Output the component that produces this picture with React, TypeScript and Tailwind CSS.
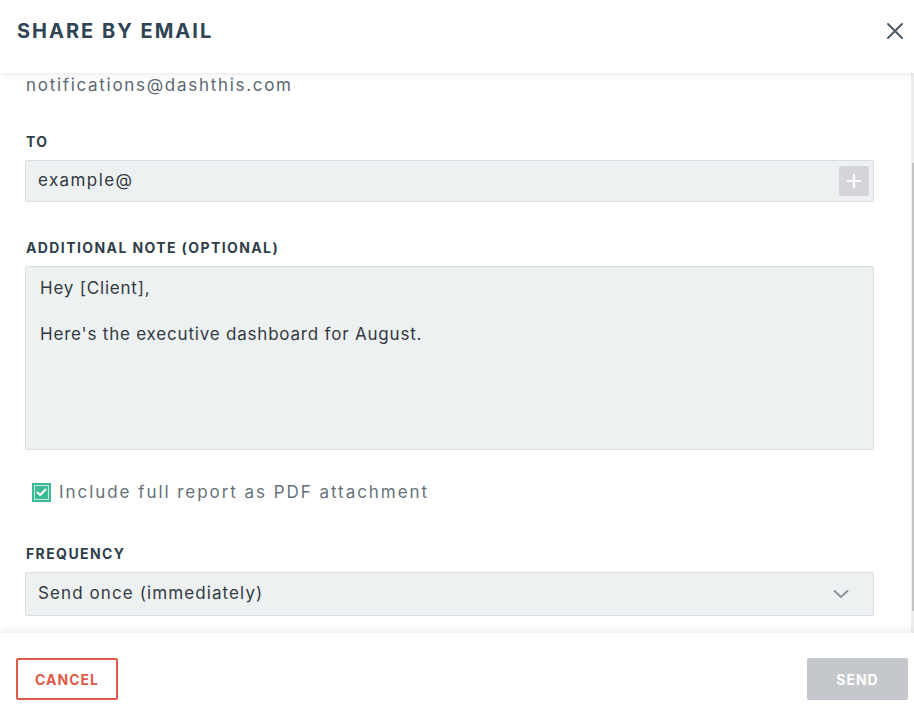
import React from "react";

export default function App() {
  const font = { fontFamily: "Inter, 'Open Sans', sans-serif" };
  return (
    <div className="w-[914px] h-[715px] bg-white flex flex-col overflow-hidden" style={font}>
      {/* Header */}
      <div className="h-[73px] shrink-0 flex items-center justify-between pl-[17px] pr-[9px] relative z-10 shadow-[0_2px_6px_rgba(0,0,0,0.08)]">
        <h1 className="text-[20px] font-bold tracking-[2px] text-[#2f4454] leading-none mt-[-12px]">SHARE BY EMAIL</h1>
        <button className="w-[20px] h-[20px] flex items-center justify-center mt-[-12px] text-[#4a5a66]">
          <svg width="18" height="18" viewBox="0 0 18 18" fill="none" stroke="currentColor" strokeWidth="2" strokeLinecap="round">
            <path d="M2 2 L16 16 M16 2 L2 16" />
          </svg>
        </button>
      </div>

      {/* Body */}
      <div className="flex-1 flex min-h-0">
        <div className="flex-1 pl-[25px] pr-[37px] pt-[2px]">
          <div className="text-[17px] tracking-[1.7px] text-[#5b6771] leading-[20px] ml-[1px]">notifications@dashthis.com</div>

          <div className="mt-[39px] text-[14px] font-bold text-[#2f3f4a] tracking-[1.4px] leading-[16px] ml-[1px]">TO</div>
          <div className="mt-[10px] h-[42px] bg-[#eef1f2] border border-[#dcdfe1] rounded-[2px] flex items-center justify-between pl-[12px] pr-[4px]">
            <span className="text-[17px] text-[#333a3f] tracking-[1.4px]">example@</span>
            <div className="w-[30px] h-[30px] bg-[#d4d4da] rounded-[2px] flex items-center justify-center">
              <svg width="14" height="14" viewBox="0 0 14 14" stroke="white" strokeWidth="2.2">
                <path d="M7 0 V14 M0 7 H14" />
              </svg>
            </div>
          </div>

          <div className="mt-[38px] text-[14px] font-bold text-[#2f3f4a] tracking-[1.4px] leading-[16px] ml-[1px]">ADDITIONAL NOTE (OPTIONAL)</div>
          <div className="mt-[10px] h-[184px] bg-[#eef1f2] border border-[#dcdfe1] rounded-[2px] pl-[14px] pt-[10px] text-[17px] text-[#333a3f] leading-[23px] tracking-[0.8px]">
            <div>Hey [Client],</div>
            <div className="mt-[23px]">Here's the executive dashboard for August.</div>
          </div>

          <div className="mt-[30px] flex items-center ml-[7px]">
            <div className="w-[19px] h-[19px] bg-[#3dbb98] flex items-center justify-center">
              <div className="w-[15px] h-[15px] border border-[#bfeadc] flex items-center justify-center">
                <svg width="11" height="9" viewBox="0 0 11 9" fill="none" stroke="white" strokeWidth="2" strokeLinecap="round" strokeLinejoin="round">
                  <path d="M1.5 4.5 L4.2 7 L9.5 1.5" />
                </svg>
              </div>
            </div>
            <span className="ml-[8px] text-[17px] text-[#66727a] tracking-[1.95px]">Include full report as PDF attachment</span>
          </div>

          <div className="mt-[40px] text-[14px] font-bold text-[#2f3f4a] tracking-[1.4px] leading-[16px] ml-[1px]">FREQUENCY</div>
          <div className="mt-[10px] h-[44px] bg-[#eef1f2] border border-[#dcdfe1] rounded-[2px] flex items-center justify-between pl-[12px] pr-[24px]">
            <span className="text-[17px] text-[#333a3f] tracking-[1.1px]">Send once (immediately)</span>
            <svg width="16" height="10" viewBox="0 0 16 10" fill="none" stroke="#8a939a" strokeWidth="2">
              <path d="M1 1.5 L8 8 L15 1.5" />
            </svg>
          </div>
        </div>
        {/* scrollbar */}
        <div className="w-[3px] bg-[#ededed] pt-[90px] pb-[22px] flex">
          <div className="flex-1 bg-[#c4c4c4] ml-[1px] w-[2px]" />
        </div>
      </div>

      {/* Footer */}
      <div className="h-[82px] shrink-0 flex items-start justify-between pl-[16px] pr-[6px] pt-[25px] relative shadow-[0_-3px_8px_rgba(0,0,0,0.07)]">
        <button className="w-[102px] h-[42px] border-2 border-[#e05a4a] rounded-[2px] text-[#e05a4a] text-[14px] font-bold tracking-[1px]">CANCEL</button>
        <button className="w-[101px] h-[42px] bg-[#c4c8cc] rounded-[2px] text-white text-[14px] font-bold tracking-[1px]">SEND</button>
      </div>
    </div>
  );
}
